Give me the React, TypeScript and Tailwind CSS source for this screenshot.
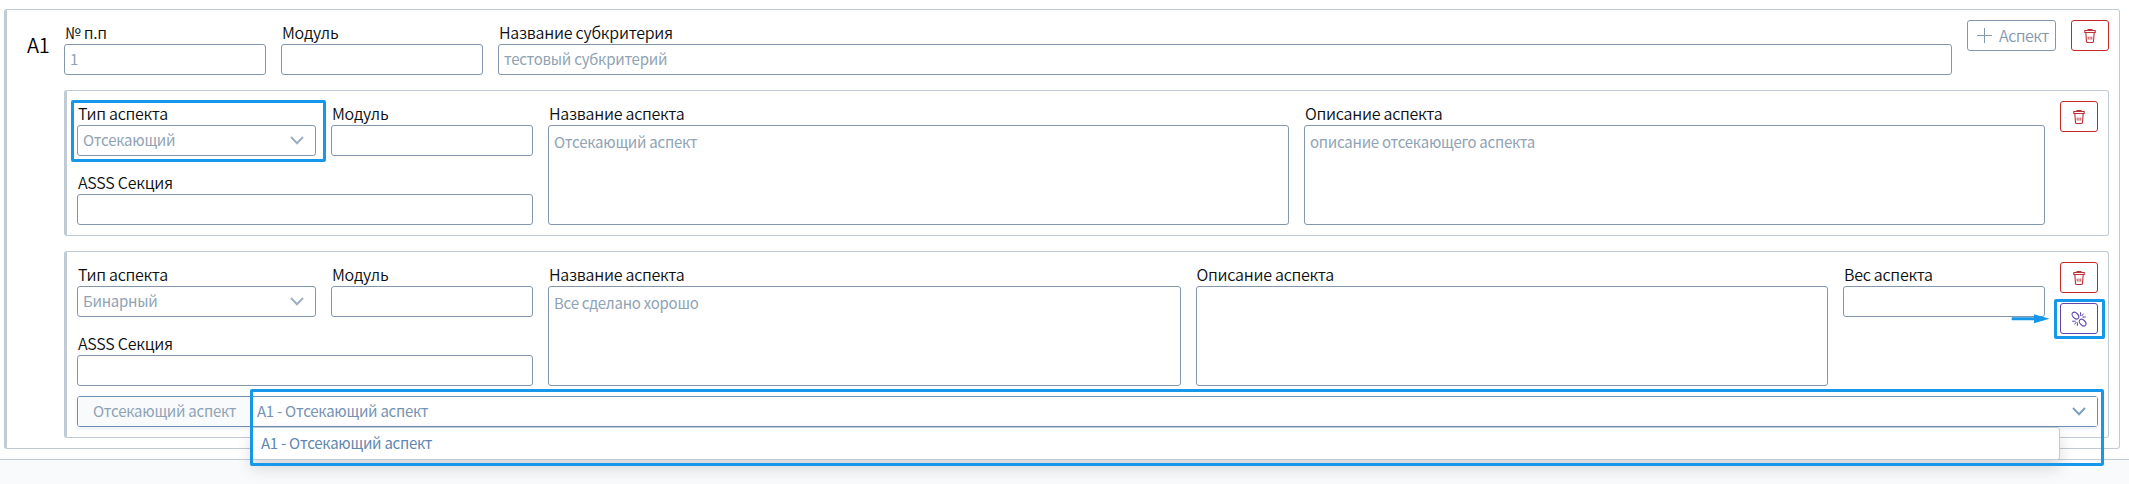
import type { ReactNode } from "react";

function Trash() {
  return (
    <svg width="12" height="16" viewBox="0 0 12 16" fill="none" stroke="currentColor" strokeWidth="1.1">
      <path d="M4 2.5V1.5H8V2.5" />
      <path d="M.8 2.5H11.2V4.5H.8Z" />
      <path d="M1.8 4.5 2.5 13.4Q2.6 14.5 3.8 14.5H8.2Q9.4 14.5 9.5 13.4L10.2 4.5" />
      <path d="M4.2 8.6V11.6M6 8.6V11.6M7.8 8.6V11.6" strokeWidth="0.9" />
    </svg>
  );
}

function Unlink() {
  return (
    <svg width="16" height="16" viewBox="0 0 16 16" fill="none" stroke="currentColor" strokeWidth="1.1">
      <ellipse cx="4.4" cy="4.6" rx="3.9" ry="2.6" transform="rotate(45 4.4 4.6)" />
      <ellipse cx="11.6" cy="11.6" rx="3.9" ry="2.6" transform="rotate(45 11.6 11.6)" />
      <path d="M9.6 1.2V4.8M12.6 2.6 10.4 5.2M14.8 6H11.4M6.4 14.8V11.4M3.4 13.4 5.4 11M1.2 10.2H4.6" strokeWidth="1" />
    </svg>
  );
}

function Chevron() {
  return (
    <svg width="14" height="9" viewBox="0 0 14 9" fill="none" stroke="currentColor" strokeWidth="2">
      <path d="M1 1 7 7.2 13 1" />
    </svg>
  );
}

function Field({ label, className = "", children }: { label: string; className?: string; children: ReactNode }) {
  return (
    <div className={`flex flex-col ${className}`}>
      <label className="h-6 pl-px text-base leading-6 font-[350] tracking-[-0.26px] whitespace-nowrap text-[#0c0e10]">{label}</label>
      {children}
    </div>
  );
}

const box = "rounded-[3px] border border-[#8297ac] bg-white text-[15px] tracking-[-0.26px] text-[#8fa3b4]";

function Input({ value = "" }: { value?: string }) {
  return <div className={`${box} h-[31px] px-[5px] leading-[27px]`}>{value}</div>;
}

function Select({ value }: { value: string }) {
  return (
    <div className={`${box} flex h-[31px] items-center justify-between pr-[11px] pl-[5px] leading-[27px]`}>
      <span className="h-[29px]">{value}</span>
      <span className="text-[#9dafc4]"><Chevron /></span>
    </div>
  );
}

function Area({ value = "" }: { value?: string }) {
  return <div className={`${box} h-[100px] px-[5px] pt-[5px] leading-[21px]`}>{value}</div>;
}

function IconButton({ tone, children }: { tone: "red" | "purple"; children: ReactNode }) {
  const color = tone === "red" ? "border-[#c62828] text-[#bd3038]" : "border-[#5e45b0] text-[#5e45b0]";
  return (
    <button className={`flex h-[31px] w-[38px] shrink-0 items-center justify-center rounded-[3px] border ${color}`}>
      {children}
    </button>
  );
}

const card = "rounded-[3px] border border-l-[3px] border-[#c0cbd6] p-[10px]";

function TypeBlock({ type }: { type: string }) {
  return (
    <div className="flex w-[456px] shrink-0 flex-col gap-[14px]">
      <div className="flex gap-[15px]">
        <Field label="Тип аспекта" className="w-[239px]"><Select value={type} /></Field>
        <Field label="Модуль" className="w-[202px]"><Input /></Field>
      </div>
      <Field label="ASSS Секция"><Input /></Field>
    </div>
  );
}

export default function App() {
  return (
    <div className="relative h-[484px] overflow-hidden bg-[#f8fafc] font-['Noto_Sans_CJK_SC',sans-serif]">
      <main className="h-[460px] border-b border-[#c1ccd7] bg-white pt-[9px] pr-[9px] pl-1">
        <section className={`${card} flex h-[440px]`}>
          <h2 className="w-[47px] shrink-0 pt-[11px] pl-[10px] text-[20px] leading-[28px] font-[350] tracking-[-0.3px] text-black">A1</h2>
          <div className="flex grow flex-col gap-[15px]">
            <div className="flex gap-[15px]">
              <Field label="№ п.п" className="w-[202px]"><Input value="1" /></Field>
              <Field label="Модуль" className="w-[202px]"><Input /></Field>
              <Field label="Название субкритерия" className="grow"><Input value="тестовый субкритерий" /></Field>
              <button className="flex h-[31px] w-[89px] items-center rounded-[3px] border border-[#8297ac] pl-[9px] text-base font-[350] tracking-[-0.5px] text-[#8398ab]">
                <svg width="15" height="15" viewBox="0 0 15 15" stroke="currentColor"><path d="M7.5 0V15M0 7.5H15" /></svg>
                <span className="pb-px pl-[7px]">Аспект</span>
              </button>
              <IconButton tone="red"><Trash /></IconButton>
            </div>

            <article className={`${card} flex gap-[15px]`}>
              <TypeBlock type="Отсекающий" />
              <Field label="Название аспекта" className="flex-1"><Area value="Отсекающий аспект" /></Field>
              <Field label="Описание аспекта" className="flex-1"><Area value="описание отсекающего аспекта" /></Field>
              <IconButton tone="red"><Trash /></IconButton>
            </article>

            <article className={`${card} flex flex-col gap-[10px]`}>
              <div className="flex gap-[15px]">
                <TypeBlock type="Бинарный" />
                <Field label="Название аспекта" className="flex-1"><Area value="Все сделано хорошо" /></Field>
                <Field label="Описание аспекта" className="flex-1"><Area /></Field>
                <Field label="Вес аспекта" className="w-[202px]"><Input /></Field>
                <div className="flex flex-col gap-[10px]">
                  <IconButton tone="red"><Trash /></IconButton>
                  <IconButton tone="purple"><Unlink /></IconButton>
                </div>
              </div>
              <div className="relative flex h-[31px] rounded-[3px] border border-[#6f8fb0] text-[15px] leading-[27px] tracking-[-0.26px] shadow-[0_2px_4px_rgba(60,80,120,0.1)]">
                <span className="w-[173px] rounded-l-[2px] border-r border-[#869bb0] bg-[#f8fafc] pl-[15px] text-[#8fa3b4]">Отсекающий аспект</span>
                <div className="flex grow items-center justify-between bg-white pr-[11px] pl-[6px] text-[#7592b3]">
                  <span className="h-[29px]">A1 - Отсекающий аспект</span>
                  <span className="text-[#7f9fc0]"><Chevron /></span>
                </div>
                <div className="absolute top-[30px] left-[173px] h-[33px] w-[1809px] rounded-[3px] border border-[#c1ccd7] bg-white pl-[9px] leading-[29px] text-[#5f87b0] shadow-[0_8px_16px_rgba(0,0,0,0.15)]">
                  A1 - Отсекающий аспект
                </div>
              </div>
            </article>
          </div>
        </section>
      </main>

      <div className="absolute top-[100px] left-[71px] h-[62px] w-[255px] rounded-[2px] border-[3px] border-[#1697ea]" />
      <div className="absolute top-[299px] left-[2054px] h-[40px] w-[51px] rounded-[2px] border-[3px] border-[#1697ea]" />
      <div className="absolute top-[389px] left-[250px] h-[77px] w-[1854px] rounded-[2px] border-[3px] border-[#1697ea]" />
      <svg className="absolute top-[314px] left-[2011px]" width="39" height="10" viewBox="0 0 39 10" fill="#1697ea">
        <path d="M1 3.2H23V.2L38.5 4.7 23 9.2V6.2H1Q0 4.7 1 3.2Z" />
      </svg>
    </div>
  );
}
